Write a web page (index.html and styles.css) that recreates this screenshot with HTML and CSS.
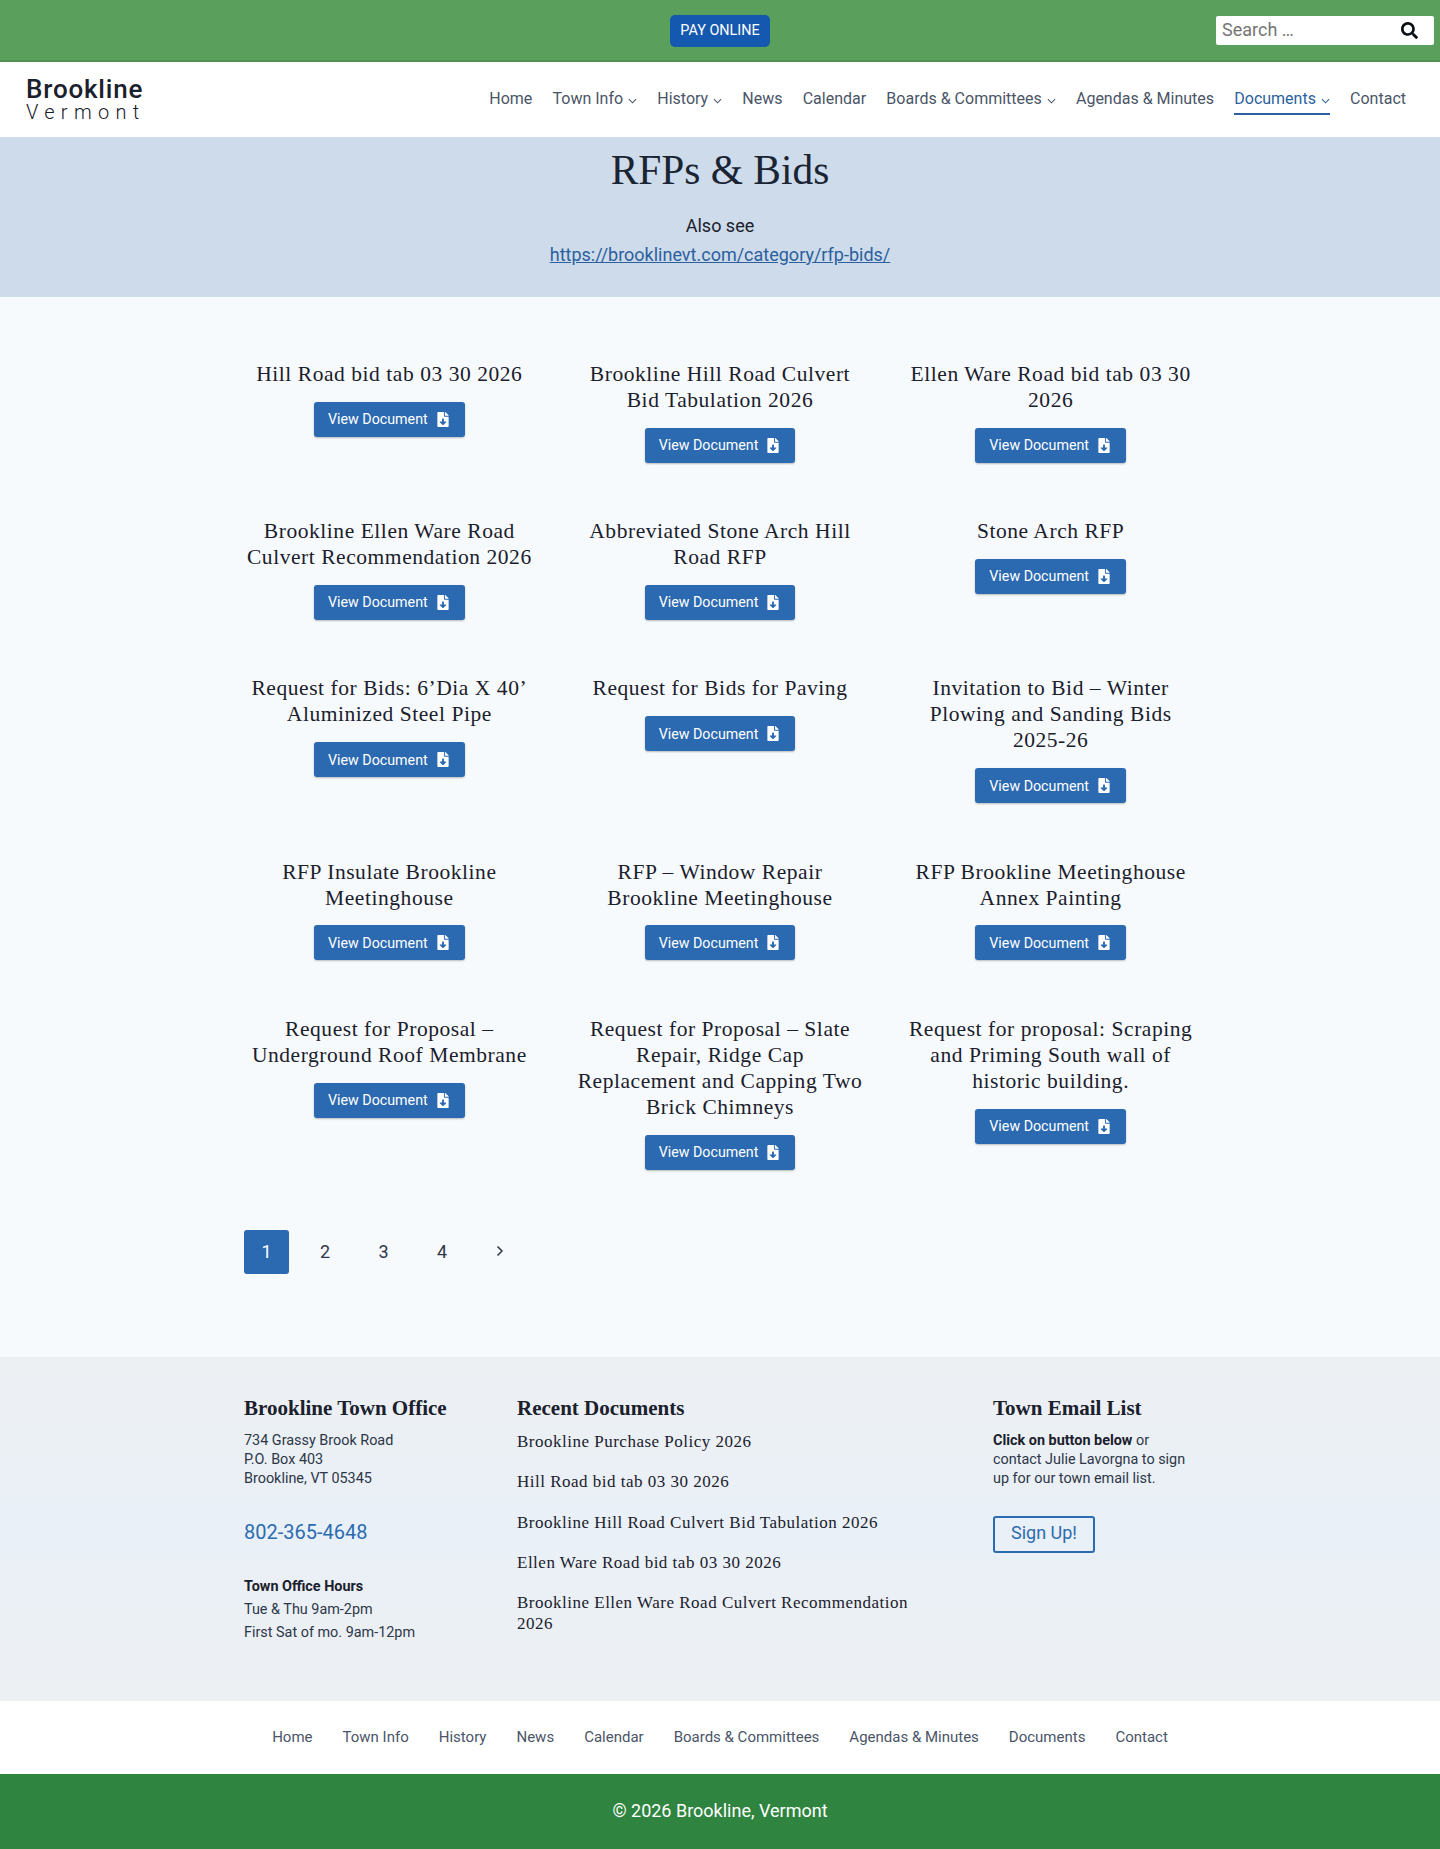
FILE: index.html
```html
<!DOCTYPE html>
<html lang="en">
<head>
    <meta charset="UTF-8">
    <meta name="viewport" content="width=device-width, initial-scale=1.0">
    <title>RFPs &amp; Bids - Brookline, Vermont</title>
    <link rel="stylesheet" href="styles.css">
</head>
<body>
    <svg class="sprite" width="0" height="0" aria-hidden="true">
        <symbol id="file-icon" viewBox="0 0 384 512"><path d="M224 136V0H24C10.7 0 0 10.7 0 24v464c0 13.3 10.7 24 24 24h336c13.3 0 24-10.7 24-24V160H248c-13.2 0-24-10.8-24-24zm76.45 211.36l-96.42 95.7c-6.65 6.61-17.39 6.61-24.04 0l-96.42-95.7C73.42 337.29 80.54 320 94.82 320H160v-80c0-8.84 7.16-16 16-16h32c8.84 0 16 7.16 16 16v80h65.18c14.28 0 21.4 17.29 11.27 27.36zM377 105L279.1 7c-4.5-4.5-10.6-7-17-7H256v128h128v-6.1c0-6.3-2.5-12.4-7-16.9z"/></symbol>
        <symbol id="caret-icon" viewBox="0 0 10 6"><path d="M1 1l4 4 4-4" fill="none" stroke="currentColor" stroke-width="1.2"/></symbol>
    </svg>

    <div class="top-bar">
        <a class="pay-btn" href="#">PAY ONLINE</a>
        <form class="search">
            <input class="search-input" type="text" placeholder="Search …">
            <svg class="search-icon" viewBox="0 0 512 512"><path d="M505 442.7L405.3 343c-4.5-4.5-10.6-7-17-7H372c27.6-35.3 44-79.7 44-128C416 93.1 322.9 0 208 0S0 93.1 0 208s93.1 208 208 208c48.3 0 92.7-16.4 128-44v16.3c0 6.4 2.5 12.5 7 17l99.7 99.7c9.4 9.4 24.6 9.4 33.9 0l28.3-28.3c9.4-9.4 9.4-24.6.1-34zM208 336c-70.7 0-128-57.2-128-128 0-70.7 57.2-128 128-128 70.7 0 128 57.2 128 128 0 70.7-57.2 128-128 128z"/></svg>
        </form>
    </div>

    <header class="site-header">
        <a class="logo" href="#">
            <span class="logo-name">Brookline</span>
            <span class="logo-sub">Vermont</span>
        </a>
        <nav class="main-nav">
            <a href="#">Home</a>
            <a href="#">Town Info <svg class="caret"><use href="#caret-icon"/></svg></a>
            <a href="#">History <svg class="caret"><use href="#caret-icon"/></svg></a>
            <a href="#">News</a>
            <a href="#">Calendar</a>
            <a href="#">Boards &amp; Committees <svg class="caret"><use href="#caret-icon"/></svg></a>
            <a href="#">Agendas &amp; Minutes</a>
            <a class="current" href="#">Documents <svg class="caret"><use href="#caret-icon"/></svg></a>
            <a href="#">Contact</a>
        </nav>
    </header>

    <section class="page-title">
        <h1>RFPs &amp; Bids</h1>
        <p>Also see</p>
        <p><a href="#">https://brooklinevt.com/category/rfp-bids/</a></p>
    </section>

    <main class="content">
        <div class="doc-grid">
            <article class="doc">
                <h2>Hill Road bid tab 03 30 2026</h2>
                <a class="doc-btn" href="#">View Document <svg class="file-icon"><use href="#file-icon"/></svg></a>
            </article>
            <article class="doc">
                <h2>Brookline Hill Road Culvert Bid Tabulation 2026</h2>
                <a class="doc-btn" href="#">View Document <svg class="file-icon"><use href="#file-icon"/></svg></a>
            </article>
            <article class="doc">
                <h2>Ellen Ware Road bid tab 03 30 2026</h2>
                <a class="doc-btn" href="#">View Document <svg class="file-icon"><use href="#file-icon"/></svg></a>
            </article>
            <article class="doc">
                <h2>Brookline Ellen Ware Road Culvert Recommendation 2026</h2>
                <a class="doc-btn" href="#">View Document <svg class="file-icon"><use href="#file-icon"/></svg></a>
            </article>
            <article class="doc">
                <h2>Abbreviated Stone Arch Hill Road RFP</h2>
                <a class="doc-btn" href="#">View Document <svg class="file-icon"><use href="#file-icon"/></svg></a>
            </article>
            <article class="doc">
                <h2>Stone Arch RFP</h2>
                <a class="doc-btn" href="#">View Document <svg class="file-icon"><use href="#file-icon"/></svg></a>
            </article>
            <article class="doc">
                <h2>Request for Bids: 6’Dia X 40’ Aluminized Steel Pipe</h2>
                <a class="doc-btn" href="#">View Document <svg class="file-icon"><use href="#file-icon"/></svg></a>
            </article>
            <article class="doc">
                <h2>Request for Bids for Paving</h2>
                <a class="doc-btn" href="#">View Document <svg class="file-icon"><use href="#file-icon"/></svg></a>
            </article>
            <article class="doc">
                <h2>Invitation to Bid – Winter Plowing and Sanding Bids 2025-26</h2>
                <a class="doc-btn" href="#">View Document <svg class="file-icon"><use href="#file-icon"/></svg></a>
            </article>
            <article class="doc">
                <h2>RFP Insulate Brookline Meetinghouse</h2>
                <a class="doc-btn" href="#">View Document <svg class="file-icon"><use href="#file-icon"/></svg></a>
            </article>
            <article class="doc">
                <h2>RFP – Window Repair Brookline Meetinghouse</h2>
                <a class="doc-btn" href="#">View Document <svg class="file-icon"><use href="#file-icon"/></svg></a>
            </article>
            <article class="doc">
                <h2>RFP Brookline Meetinghouse Annex Painting</h2>
                <a class="doc-btn" href="#">View Document <svg class="file-icon"><use href="#file-icon"/></svg></a>
            </article>
            <article class="doc">
                <h2>Request for Proposal – Underground Roof Membrane</h2>
                <a class="doc-btn" href="#">View Document <svg class="file-icon"><use href="#file-icon"/></svg></a>
            </article>
            <article class="doc">
                <h2>Request for Proposal – Slate Repair, Ridge Cap Replacement and Capping Two Brick Chimneys</h2>
                <a class="doc-btn" href="#">View Document <svg class="file-icon"><use href="#file-icon"/></svg></a>
            </article>
            <article class="doc">
                <h2>Request for proposal: Scraping and Priming South wall of historic building.</h2>
                <a class="doc-btn" href="#">View Document <svg class="file-icon"><use href="#file-icon"/></svg></a>
            </article>
        </div>

        <div class="pagination">
            <span class="page active">1</span>
            <a class="page" href="#">2</a>
            <a class="page" href="#">3</a>
            <a class="page" href="#">4</a>
            <a class="page" href="#"><svg class="next-icon" viewBox="0 0 8 12"><path d="M1.5 1.5L6 6l-4.5 4.5" fill="none" stroke="currentColor" stroke-width="1.5"/></svg></a>
        </div>
    </main>

    <footer>
        <div class="footer-widgets">
            <div class="footer-inner">
                <div class="widget widget-office">
                    <h3>Brookline Town Office</h3>
                    <p class="address">734 Grassy Brook Road<br>P.O. Box 403<br>Brookline, VT 05345</p>
                    <a class="phone" href="#">802-365-4648</a>
                    <p class="hours"><strong>Town Office Hours</strong><br>Tue &amp; Thu 9am-2pm<br>First Sat of mo. 9am-12pm</p>
                </div>
                <div class="widget widget-recent">
                    <h3>Recent Documents</h3>
                    <ul>
                        <li><a href="#">Brookline Purchase Policy 2026</a></li>
                        <li><a href="#">Hill Road bid tab 03 30 2026</a></li>
                        <li><a href="#">Brookline Hill Road Culvert Bid Tabulation 2026</a></li>
                        <li><a href="#">Ellen Ware Road bid tab 03 30 2026</a></li>
                        <li><a href="#">Brookline Ellen Ware Road Culvert Recommendation 2026</a></li>
                    </ul>
                </div>
                <div class="widget widget-email">
                    <h3>Town Email List</h3>
                    <p class="address"><strong>Click on button below</strong> or contact Julie Lavorgna to sign up for our town email list.</p>
                    <a class="signup-btn" href="#">Sign Up!</a>
                </div>
            </div>
        </div>
        <nav class="footer-nav">
            <a href="#">Home</a>
            <a href="#">Town Info</a>
            <a href="#">History</a>
            <a href="#">News</a>
            <a href="#">Calendar</a>
            <a href="#">Boards &amp; Committees</a>
            <a href="#">Agendas &amp; Minutes</a>
            <a href="#">Documents</a>
            <a href="#">Contact</a>
        </nav>
        <div class="copyright">© 2026 Brookline, Vermont</div>
    </footer>
</body>
</html>
```

FILE: styles.css
```css
body {
    margin: 0;
    font-family: Roboto, "Liberation Sans", sans-serif;
    color: #1a202c;
    background-color: #f7fafc;
}
a {
    text-decoration: none;
    color: inherit;
}
.sprite {
    position: absolute;
}

/* top bar */
.top-bar {
    height: 60px;
    border-bottom: 2px solid #4f8f52;
    background-color: #5a9f5c;
    display: flex;
    justify-content: center;
    align-items: flex-start;
    position: relative;
}
.pay-btn {
    margin-top: 15px;
    width: 100px;
    height: 32px;
    line-height: 31px;
    text-align: center;
    font-size: 14.4px;
    color: #fff;
    background-color: #1558b0;
    border-radius: 5px;
}
.search {
    position: absolute;
    top: 16px;
    right: 6px;
    width: 218px;
    height: 29px;
    background: #fff;
    border-radius: 2px;
    display: flex;
    align-items: center;
}
.search-input {
    flex: 1;
    min-width: 0;
    border: 0;
    outline: 0;
    background: none;
    padding: 0 0 2px 6px;
    font-family: inherit;
    font-size: 18px;
}
.search-input::placeholder {
    color: #757575;
}
.search-icon {
    width: 17px;
    height: 17px;
    margin-right: 16px;
    fill: #0b0f14;
}

/* header */
.site-header {
    height: 75px;
    background: #fff;
    display: flex;
    justify-content: space-between;
    align-items: center;
    padding: 0 34px 0 26px;
}
.logo {
    display: flex;
    flex-direction: column;
    color: #1a202c;
}
.logo-name {
    font-size: 26px;
    line-height: 25px;
    font-weight: 500;
    letter-spacing: .8px;
}
.logo-sub {
    font-size: 20px;
    line-height: 20px;
    font-weight: 300;
    letter-spacing: 6.3px;
}
.main-nav {
    display: flex;
    gap: 20.2px;
    font-size: 16px;
    color: #4a5568;
}
.main-nav a {
    padding: 4.5px 0 5.5px;
    border-bottom: 2px solid transparent;
    line-height: 19px;
}
.main-nav a.current {
    color: #2c5f9e;
    border-bottom-color: #2c5f9e;
}
.caret {
    width: 9px;
    height: 6px;
    margin-left: 1px;
}

/* page title */
.page-title {
    height: 160px;
    box-sizing: border-box;
    padding-top: 8px;
    background-color: #cddbea;
    text-align: center;
}
.page-title h1 {
    margin: 0 0 16px;
    font-family: "Liberation Serif", serif;
    font-size: 41.4px;
    line-height: 50px;
    font-weight: 400;
    color: #1a2433;
}
.page-title p {
    margin: 0;
    font-size: 18px;
    line-height: 29px;
}
.page-title a {
    color: #2c5f9e;
    text-decoration: underline;
}

/* document grid */
.content {
    width: 952px;
    margin: 0 auto;
    padding: 64px 0 83px;
}
.doc-grid {
    display: grid;
    grid-template-columns: repeat(3, 1fr);
    column-gap: 40px;
    row-gap: 55.4px;
    align-items: start;
}
.doc {
    text-align: center;
}
.doc h2 {
    margin: 0 0 14.8px;
    font-family: "Liberation Serif", serif;
    font-size: 21.5px;
    line-height: 26px;
    font-weight: 400;
    letter-spacing: .55px;
}
.doc-btn {
    display: inline-flex;
    align-items: center;
    gap: 9px;
    height: 35px;
    padding: 0 16px 0 14px;
    font-size: 14.25px;
    color: #fff;
    background-color: #2b69b0;
    border-radius: 3px;
    box-shadow: 0 1px 2px rgba(0, 0, 0, .25);
}
.file-icon {
    width: 12px;
    height: 15px;
    fill: #fff;
}

/* pagination */
.pagination {
    margin-top: 60.2px;
    display: flex;
    gap: 13.5px;
}
.page {
    width: 45px;
    height: 44px;
    display: flex;
    justify-content: center;
    align-items: center;
    font-size: 18px;
    color: #2d3748;
    border-radius: 3px;
}
.page.active {
    color: #fff;
    background-color: #2b69b0;
}
.next-icon {
    width: 8px;
    height: 12px;
    margin-bottom: 2px;
    margin-right: 1px;
}

/* footer */
.footer-widgets {
    height: 344px;
    box-sizing: border-box;
    padding-top: 38px;
    background: linear-gradient(#edf0f3, #e9f0f7 50%, #edf0f3);
}
.footer-inner {
    width: 952px;
    margin: 0 auto;
    display: flex;
}
.widget h3 {
    margin: 0 0 10.5px;
    font-family: "Liberation Serif", serif;
    font-size: 21px;
    line-height: 26px;
    font-weight: 700;
}
.widget-office {
    width: 273px;
}
.widget-recent {
    width: 476px;
}
.widget-email {
    width: 203px;
}
.address {
    margin: 0;
    font-size: 14.4px;
    line-height: 19px;
    color: #2d3748;
}
.address strong {
    color: #1a202c;
}
.phone {
    display: block;
    margin-top: 31px;
    font-size: 20px;
    line-height: 26px;
    color: #2b6cb0;
}
.hours {
    margin: 30px 0 0;
    font-size: 14.4px;
    line-height: 23px;
    color: #2d3748;
}
.hours strong {
    color: #1a202c;
}
.widget-recent ul {
    margin: 2px 0 0;
    padding: 0;
    list-style: none;
    display: flex;
    flex-direction: column;
    gap: 19.2px;
}
.widget-recent li {
    width: 410px;
    font-family: "Liberation Serif", serif;
    font-size: 17px;
    line-height: 21px;
    letter-spacing: .5px;
}
.signup-btn {
    display: inline-block;
    margin-top: 28px;
    width: 102px;
    height: 37px;
    box-sizing: border-box;
    line-height: 30px;
    text-align: center;
    border: 2px solid #2b6cb0;
    border-radius: 3px;
    font-size: 18px;
    color: #2b6cb0;
}
.footer-nav {
    height: 73px;
    background: #fff;
    display: flex;
    justify-content: center;
    align-items: center;
    gap: 30px;
    font-size: 15px;
    color: #4a5568;
}
.copyright {
    height: 75px;
    background-color: #2f8540;
    color: #fff;
    font-size: 18px;
    line-height: 74px;
    text-align: center;
}
```
